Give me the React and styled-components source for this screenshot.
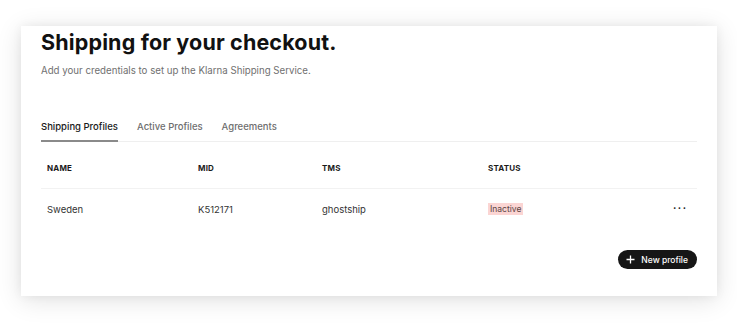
import React from "react";
import styled, { createGlobalStyle } from "styled-components";

const GlobalStyle = createGlobalStyle`
  html, body {
    margin: 0;
    padding: 0;
    background: #ffffff;
  }
  body {
    font-family: "Inter", "Liberation Sans", sans-serif;
    color: #1c1c1c;
  }
`;

const Page = styled.div`
  width: 737px;
  height: 323px;
  padding: 26px 20px 0 21px;
  box-sizing: border-box;
  overflow: hidden;
`;

const Card = styled.div`
  width: 696px;
  height: 270px;
  background: #ffffff;
  box-shadow: 0 4px 24px rgba(0, 0, 0, 0.12), 0 0 10px rgba(0, 0, 0, 0.05);
  padding: 3px 20px 0 20px;
  box-sizing: border-box;
  display: flex;
  flex-direction: column;
`;

const Title = styled.h1`
  margin: 0;
  font-size: 21.5px;
  line-height: 26px;
  font-weight: 700;
  letter-spacing: 0.15px;
  color: #111;
`;

const Subtitle = styled.p`
  margin: 9px 0 0 0;
  font-size: 9.7px;
  line-height: 14px;
  color: #707070;
`;

const Tabs = styled.div`
  display: flex;
  gap: 19px;
  margin-top: 42px;
  border-bottom: 1px solid #efefef;
`;

const Tab = styled.div`
  font-size: 9.5px;
  line-height: 14px;
  font-weight: 500;
  padding-bottom: 6px;
  color: ${(p) => (p.active ? "#1a1a1a" : "#6e6e6e")};
  border-bottom: 2px solid ${(p) => (p.active ? "#8a8a8a" : "transparent")};
  margin-bottom: -1px;
`;

const Row = styled.div`
  display: grid;
  grid-template-columns: 151px 124px 166px 1fr 24px;
  align-items: center;
  height: ${(p) => p.h}px;
  padding-top: ${(p) => p.pt || 0}px;
  box-sizing: border-box;
  border-bottom: ${(p) => (p.line ? "1px solid #f2f2f2" : "none")};
`;

const HeadCell = styled.div`
  padding-left: 6px;
  font-size: 8px;
  font-weight: 700;
  letter-spacing: 0.2px;
  color: #1a1a1a;
`;

const Cell = styled.div`
  padding-left: 6px;
  font-size: 9.5px;
  color: #333;
`;

const Badge = styled.span`
  display: inline-block;
  background: #fbd5d3;
  color: #5a4444;
  font-size: 8.5px;
  line-height: 12px;
  padding: 0 2px;
`;

const Dots = styled.div`
  font-size: 10px;
  font-weight: 700;
  color: #222;
  letter-spacing: 1.5px;
  margin-top: -8px;
`;

const Footer = styled.div`
  display: flex;
  justify-content: flex-end;
  margin-top: 21px;
`;

const NewButton = styled.button`
  display: flex;
  align-items: center;
  gap: 6px;
  height: 19px;
  padding: 0 9px 0 8px;
  border: none;
  border-radius: 10px;
  background: #161616;
  color: #fff;
  font-family: inherit;
  font-size: 8.5px;
  font-weight: 500;
`;

export default function App() {
  return (
    <>
      <GlobalStyle />
      <Page>
        <Card>
          <Title>Shipping for your checkout.</Title>
          <Subtitle>Add your credentials to set up the Klarna Shipping Service.</Subtitle>
          <Tabs>
            <Tab active>Shipping Profiles</Tab>
            <Tab>Active Profiles</Tab>
            <Tab>Agreements</Tab>
          </Tabs>
          <Row h={47} pt={6} line>
            <HeadCell>NAME</HeadCell>
            <HeadCell>MID</HeadCell>
            <HeadCell>TMS</HeadCell>
            <HeadCell>STATUS</HeadCell>
            <div />
          </Row>
          <Row h={40}>
            <Cell>Sweden</Cell>
            <Cell>K512171</Cell>
            <Cell>ghostship</Cell>
            <Cell>
              <Badge>Inactive</Badge>
            </Cell>
            <Dots>...</Dots>
          </Row>
          <Footer>
            <NewButton>
              <svg width="9" height="9" viewBox="0 0 9 9">
                <path d="M4.5 0.5v8M0.5 4.5h8" stroke="#fff" strokeWidth="1.3" />
              </svg>
              New profile
            </NewButton>
          </Footer>
        </Card>
      </Page>
    </>
  );
}
